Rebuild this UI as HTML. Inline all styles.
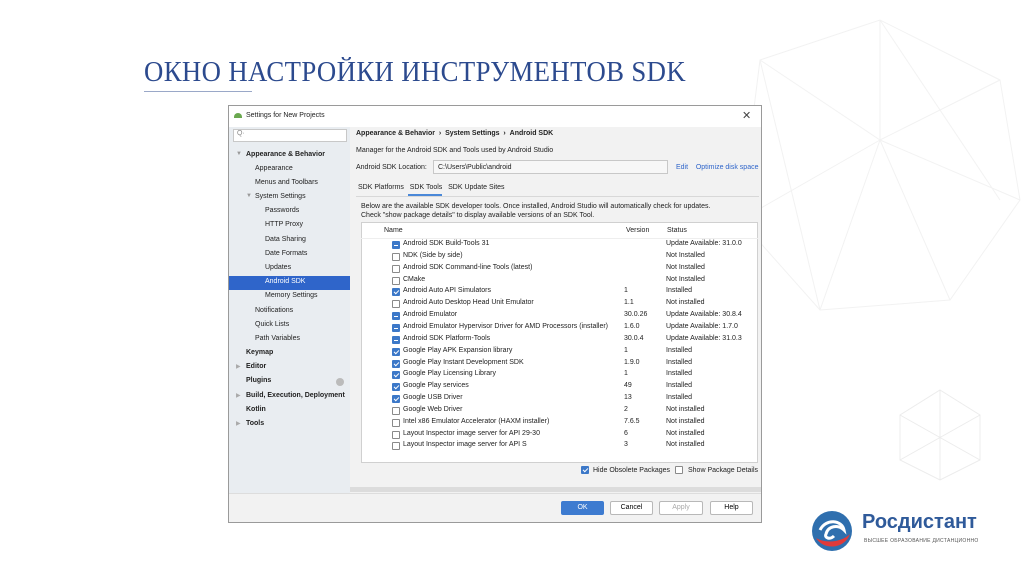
<!DOCTYPE html>
<html><head><meta charset="utf-8"><style>
*{margin:0;padding:0;box-sizing:border-box}
body{width:1024px;height:574px;background:#fff;position:relative;overflow:hidden;font-family:"Liberation Sans","DejaVu Sans",sans-serif;}
.a{position:absolute;white-space:nowrap}
.t{font-family:"Liberation Serif",serif;font-size:28px;color:#2c4a8e;letter-spacing:0.4px}
.dlg{left:228px;top:105px;width:534px;height:418px;border:1px solid #9a9a9a;background:#f2f2f2}
.s{font-size:7px;color:#222}
.b{font-weight:bold}
.cb{position:absolute;width:8px;height:8px;border:1px solid #8a8a8a;background:#fff;border-radius:1px}
.cb.c{background:#3c78c8;border-color:#3c78c8}
.cb.c::after{content:"";position:absolute;left:2px;top:0px;width:2px;height:4px;border:solid #fff;border-width:0 1px 1px 0;transform:rotate(45deg)}
.cb.m{background:#3c78c8;border-color:#3c78c8}
.cb.m::after{content:"";position:absolute;left:1px;top:3px;width:4px;height:1px;background:#fff}
.btn{position:absolute;height:14px;border:1px solid #b8b8b8;background:#fff;font-size:7px;text-align:center;line-height:12px;border-radius:2px}
</style></head><body>
<svg class="a" style="left:700px;top:0" width="324" height="330" viewBox="0 0 324 330"><g stroke="#f2f2f2" fill="none" stroke-width="1">
<polygon points="60,60 180,20 300,80 320,200 250,300 120,310 40,220"/>
<path d="M60,60 L180,140 L300,80 M180,20 L180,140 L320,200 M180,140 L250,300 M180,140 L120,310 M180,140 L40,220 M60,60 L120,310 M180,20 L300,200"/></g></svg>
<svg class="a" style="left:895px;top:385px" width="90" height="100" viewBox="0 0 90 100"><g stroke="#ececec" fill="none"><polygon points="45,5 85,30 85,75 45,95 5,75 5,30"/><path d="M45,5 L45,95 M5,30 L85,75 M85,30 L5,75"/></g></svg>
<div class="a t" style="left:144px;top:57px;transform:scaleX(0.955);transform-origin:left">ОКНО НАСТРОЙКИ ИНСТРУМЕНТОВ SDK</div>
<div class="a" style="left:144px;top:91px;width:108px;height:1px;background:#9aa8c8"></div>
<div class="a dlg"></div>
<div class="a" style="left:229px;top:106px;width:532px;height:21px;background:#fff"></div>
<div class="a" style="left:234px;top:113px;width:8px;height:5px;background:#6aa84f;border-radius:4px 4px 0 0"></div>
<div class="a s" style="left:246px;top:112px">Settings for New Projects</div>
<div class="a" style="left:742px;top:109px;font-size:11px;color:#444">✕</div>
<div class="a" style="left:229px;top:127px;width:121px;height:366px;background:#e9edf1"></div>
<div class="a" style="left:233px;top:129px;width:114px;height:13px;background:#fff;border:1px solid #c8c8c8;font-size:7px;color:#888;padding-left:3px">Q·</div>
<div class="a" style="left:229px;top:276px;width:121px;height:14px;background:#2f65ca"></div>
<div class="a s" style="left:236px;top:151px;font-size:6px;color:#999">▼</div>
<div class="a s b" style="left:246px;top:151px">Appearance &amp; Behavior</div>
<div class="a s" style="left:255px;top:165px">Appearance</div>
<div class="a s" style="left:255px;top:179px">Menus and Toolbars</div>
<div class="a s" style="left:246px;top:193px;font-size:6px;color:#999">▼</div>
<div class="a s" style="left:255px;top:193px">System Settings</div>
<div class="a s" style="left:265px;top:207px">Passwords</div>
<div class="a s" style="left:265px;top:221px">HTTP Proxy</div>
<div class="a s" style="left:265px;top:236px">Data Sharing</div>
<div class="a s" style="left:265px;top:250px">Date Formats</div>
<div class="a s" style="left:265px;top:264px">Updates</div>
<div class="a s" style="left:265px;top:278px;color:#fff">Android SDK</div>
<div class="a s" style="left:265px;top:292px">Memory Settings</div>
<div class="a s" style="left:255px;top:307px">Notifications</div>
<div class="a s" style="left:255px;top:321px">Quick Lists</div>
<div class="a s" style="left:255px;top:335px">Path Variables</div>
<div class="a s b" style="left:246px;top:349px">Keymap</div>
<div class="a s" style="left:236px;top:363px;font-size:6px;color:#aaa">▶</div>
<div class="a s b" style="left:246px;top:363px">Editor</div>
<div class="a s b" style="left:246px;top:377px">Plugins</div>
<div class="a" style="left:336px;top:378px;width:8px;height:8px;border-radius:50%;background:#bbb"></div>
<div class="a s" style="left:236px;top:392px;font-size:6px;color:#aaa">▶</div>
<div class="a s b" style="left:246px;top:392px">Build, Execution, Deployment</div>
<div class="a s b" style="left:246px;top:406px">Kotlin</div>
<div class="a s" style="left:236px;top:420px;font-size:6px;color:#aaa">▶</div>
<div class="a s b" style="left:246px;top:420px">Tools</div>

<div class="a s b" style="left:356px;top:130px">Appearance &amp; Behavior &nbsp;› &nbsp;System Settings &nbsp;› &nbsp;Android SDK</div>
<div class="a s" style="left:356px;top:147px">Manager for the Android SDK and Tools used by Android Studio</div>
<div class="a s" style="left:356px;top:164px">Android SDK Location:</div>
<div class="a s" style="left:433px;top:160px;width:235px;height:14px;border:1px solid #c8c8c8;background:#f7f7f7;padding:3px 0 0 4px">C:\Users\Public\android</div>
<div class="a s" style="left:676px;top:164px;color:#2f65ca">Edit &nbsp;&nbsp; Optimize disk space</div>
<div class="a s" style="left:358px;top:184px">SDK Platforms &nbsp;&nbsp;SDK Tools &nbsp;&nbsp;SDK Update Sites</div>
<div class="a" style="left:408px;top:194px;width:34px;height:2px;background:#4a88d8"></div>
<div class="a" style="left:356px;top:196px;width:403px;height:1px;background:#d8d8d8"></div>
<div class="a s" style="left:361px;top:202px;line-height:9px">Below are the available SDK developer tools. Once installed, Android Studio will automatically check for updates.<br>Check "show package details" to display available versions of an SDK Tool.</div>
<div class="a" style="left:361px;top:222px;width:397px;height:241px;background:#fff;border:1px solid #d0d0d0"></div>
<div class="a s" style="left:384px;top:227px">Name</div>
<div class="a s" style="left:626px;top:227px">Version</div>
<div class="a s" style="left:667px;top:227px">Status</div>
<div class="a" style="left:361px;top:238px;width:397px;height:1px;background:#eee"></div>
<div id="rows"></div>
<div class="cb c" style="left:581px;top:466px"></div>
<div class="a s" style="left:593px;top:467px">Hide Obsolete Packages</div>
<div class="cb" style="left:675px;top:466px"></div>
<div class="a s" style="left:688px;top:467px">Show Package Details</div>
<div class="a" style="left:350px;top:487px;width:411px;height:5px;background:#dcdcdc"></div>
<div class="a" style="left:229px;top:493px;width:532px;height:29px;background:#f2f2f2;border-top:1px solid #ddd"></div>
<div class="btn" style="left:561px;top:501px;width:43px;background:#3d7bd0;border-color:#3d7bd0;color:#fff">OK</div>
<div class="btn" style="left:610px;top:501px;width:43px">Cancel</div>
<div class="btn" style="left:659px;top:501px;width:44px;color:#aaa">Apply</div>
<div class="btn" style="left:710px;top:501px;width:43px">Help</div>

<svg class="a" style="left:808px;top:508px" width="48" height="46" viewBox="0 0 48 46"><circle cx="24" cy="23" r="20" fill="#2f6fae"/><path d="M8,30 C15,42 36,42 42,26 C34,34 18,36 8,30Z" fill="#e03a3a"/><path d="M12,22 C18,10 34,12 36,22 C30,16 20,18 18,26 C16,30 22,32 26,28" stroke="#fff" stroke-width="3" fill="none"/></svg>
<div class="a" style="left:862px;top:511px;font-size:20px;font-weight:bold;color:#2f5a9a">Росдистант</div>
<div class="a" style="left:864px;top:538px;font-size:5px;color:#555;letter-spacing:0.3px">ВЫСШЕЕ ОБРАЗОВАНИЕ ДИСТАНЦИОННО</div>
<script>
var R=[["m","Android SDK Build-Tools 31","","Update Available: 31.0.0"],["","NDK (Side by side)","","Not Installed"],["","Android SDK Command-line Tools (latest)","","Not Installed"],["","CMake","","Not Installed"],["c","Android Auto API Simulators","1","Installed"],["","Android Auto Desktop Head Unit Emulator","1.1","Not installed"],["m","Android Emulator","30.0.26","Update Available: 30.8.4"],["m","Android Emulator Hypervisor Driver for AMD Processors (installer)","1.6.0","Update Available: 1.7.0"],["m","Android SDK Platform-Tools","30.0.4","Update Available: 31.0.3"],["c","Google Play APK Expansion library","1","Installed"],["c","Google Play Instant Development SDK","1.9.0","Installed"],["c","Google Play Licensing Library","1","Installed"],["c","Google Play services","49","Installed"],["c","Google USB Driver","13","Installed"],["","Google Web Driver","2","Not installed"],["","Intel x86 Emulator Accelerator (HAXM installer)","7.6.5","Not installed"],["","Layout Inspector image server for API 29-30","6","Not installed"],["","Layout Inspector image server for API S","3","Not installed"]];
var h="";R.forEach(function(r,i){var y=240+i*11.85;h+='<div class="cb '+r[0]+'" style="left:392px;top:'+(y+1)+'px"></div><div class="a s" style="left:403px;top:'+y+'px">'+r[1]+'</div><div class="a s" style="left:624px;top:'+y+'px">'+r[2]+'</div><div class="a s" style="left:666px;top:'+y+'px">'+r[3]+'</div>';});
document.getElementById("rows").innerHTML=h;
</script>
</body></html>
